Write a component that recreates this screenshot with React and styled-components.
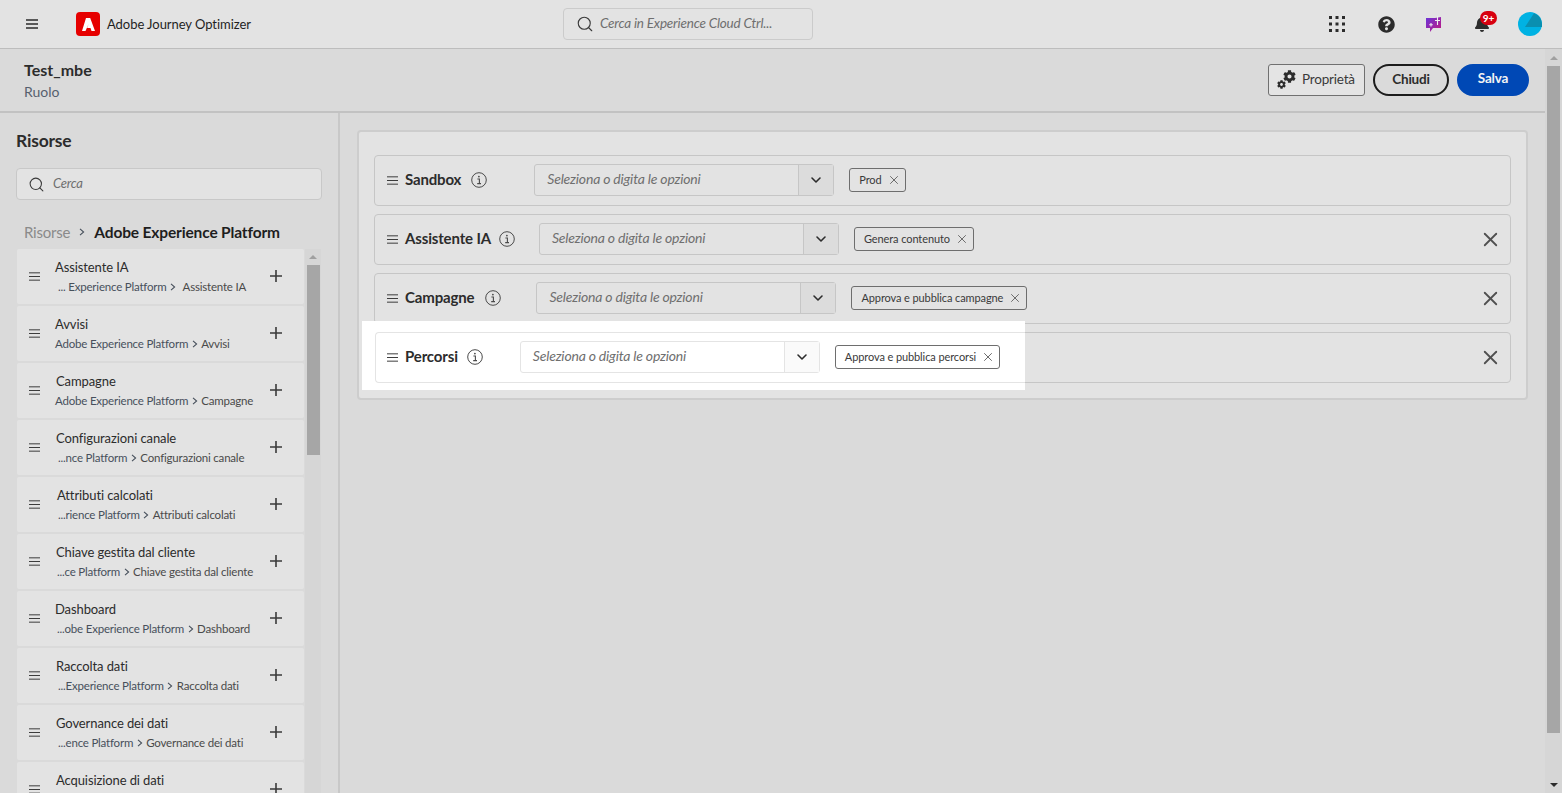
import React from 'react'
import styled, { createGlobalStyle } from 'styled-components'
import { Search, ChevronDown, X } from 'lucide-react'
import { FaQuestionCircle, FaBell, FaCog } from 'react-icons/fa'

const GlobalStyle = createGlobalStyle`
  html, body { margin: 0; padding: 0; height: 100%; overflow: hidden; }
  body { font-family: Lato, "Noto Sans", sans-serif; color: #2c2c2c; background: #dadada; }
  * { box-sizing: border-box; }
`

const Page = styled.div`
  height: 100vh;
  display: flex;
  flex-direction: column;
  overflow: hidden;
`

const TopBar = styled.header`
  flex: none;
  height: 49px;
  display: grid;
  grid-template-columns: 563px 250px 1fr;
  align-items: center;
  background: #e3e3e3;
  border-bottom: 1px solid #bdbdbd;
`

const Brand = styled.div`
  display: flex;
  align-items: center;
  padding-left: 26px;
`

const BrandName = styled.span`
  margin-left: 7px;
  font-size: 13px;
  color: #1f1f1f;
  letter-spacing: -0.05px;
`

const LogoBox = styled.span`
  margin-left: 38px;
  width: 24px;
  height: 24px;
  border-radius: 4px;
  background: #e60000;
  display: flex;
  align-items: center;
  justify-content: center;
`

const GlobalSearch = styled.div`
  height: 32px;
  display: flex;
  align-items: center;
  gap: 6px;
  padding-left: 12px;
  border: 1px solid #cbcbcb;
  border-radius: 4px;
  color: #3a3a3a;
`

const SearchHint = styled.span`
  font-size: ${p => p.$size || 14}px;
  font-style: italic;
  color: #6f6f6f;
  letter-spacing: -0.2px;
  margin-bottom: ${p => p.$lift || 0}px;
`

const TopIcons = styled.div`
  display: flex;
  align-items: center;
  justify-content: flex-end;
  padding-right: 20px;
`

const IconSlot = styled.span`
  position: relative;
  width: 24px;
  height: 24px;
  margin-left: ${p => p.$gap}px;
  display: flex;
  align-items: center;
  justify-content: center;
  color: #2c2c2c;
`

const Badge = styled.span`
  position: absolute;
  top: -1px;
  left: 10px;
  width: 17px;
  height: 14px;
  border-radius: 7px;
  background: #d7000f;
  color: #fff;
  font-size: 10px;
  font-weight: 700;
  line-height: 14px;
  text-align: center;
`

const Body = styled.div`
  flex: 1;
  min-height: 0;
  display: flex;
`

const Main = styled.div`
  flex: 1;
  min-width: 0;
  display: flex;
  flex-direction: column;
`

const PageHeader = styled.div`
  flex: none;
  height: 64px;
  display: flex;
  align-items: center;
  justify-content: space-between;
  padding: 0 16px 0 24px;
  border-bottom: 2px solid #c2c2c2;
`

const TitleBlock = styled.div`
  display: flex;
  flex-direction: column;
  gap: 3px;
`

const PageTitle = styled.div`
  font-size: 16px;
  font-weight: 700;
  line-height: 20px;
  color: #2c2c2c;
`

const PageRole = styled.div`
  font-size: 14px;
  line-height: 18px;
  color: #56606e;
`

const HeaderActions = styled.div`
  display: flex;
  align-items: center;
  gap: 8px;
  margin-top: -1px;
`

const PropsButton = styled.button`
  width: 97px;
  height: 32px;
  display: flex;
  align-items: center;
  gap: 6px;
  padding: 0 0 2px 8px;
  background: #e4e4e4;
  border: 1px solid #707070;
  border-radius: 3px;
  font: 13.5px Lato, sans-serif;
  color: #3a3a3a;
  letter-spacing: -0.2px;
`

const GearPair = styled.span`
  position: relative;
  width: 19px;
  height: 19px;
  margin-top: 2px;
  display: block;
  color: #2c2c2c;
  & > svg { position: absolute; }
  & > svg:first-child { right: 0; top: 0; }
  & > svg:last-child { left: 0; bottom: 0; }
`

const PillButton = styled.button`
  width: ${p => p.$w}px;
  height: 32px;
  border-radius: 16px;
  border: 2px solid ${p => (p.$primary ? '#0048b5' : '#1c1c1c')};
  background: ${p => (p.$primary ? '#0048b5' : 'transparent')};
  color: ${p => (p.$primary ? '#f4f4f4' : '#2c2c2c')};
  font: 700 13.5px Lato, sans-serif;
  letter-spacing: -0.2px;
  padding: 0 0 ${p => (p.$primary ? 3 : 2)}px;
`

const Columns = styled.div`
  flex: 1;
  min-height: 0;
  display: flex;
`

const Sidebar = styled.aside`
  flex: none;
  width: 340px;
  display: flex;
  flex-direction: column;
  border-right: 2px solid #c8c8c8;
  overflow: hidden;
`

const SideTitle = styled.h2`
  margin: 17px 0 0 16px;
  font-size: 17.5px;
  line-height: 22px;
  font-weight: 700;
  color: #2c2c2c;
  letter-spacing: -0.2px;
`

const SideSearch = styled.div`
  margin: 16px 16px 0 16px;
  height: 32px;
  flex: none;
  display: flex;
  align-items: center;
  gap: 8px;
  padding-left: 11px;
  background: #e3e3e3;
  border: 1px solid #c8c8c8;
  border-radius: 4px;
  color: #3a3a3a;
`

const Crumbs = styled.div`
  margin: 22px 0 0 24px;
  height: 20px;
  flex: none;
  display: flex;
  align-items: center;
  gap: 9px;
  white-space: nowrap;
`

const CrumbRoot = styled.span`
  font-size: 15px;
  color: #8a8a8a;
  letter-spacing: -0.2px;
`

const CrumbCurrent = styled.span`
  font-size: 15.5px;
  color: #1e1e1e;
  font-weight: 700;
  letter-spacing: -0.15px;
`

const ListArea = styled.div`
  flex: 1;
  min-height: 0;
  margin-top: 7px;
  display: flex;
  padding-left: 17px;
`

const ResourceList = styled.div`
  width: 287px;
  flex: none;
  display: flex;
  flex-direction: column;
  gap: 2px;
`

const ResourceItem = styled.div`
  flex: none;
  height: 55px;
  display: grid;
  grid-template-columns: 26px 1fr 34px;
  align-items: center;
  background: #e3e3e3;
  border-radius: 2px;
  padding-left: 12px;
`

const ResourceText = styled.div`
  min-width: 0;
  min-height: 37px;
  margin-top: -2px;
  padding-top: 1px;
`

const ResourceName = styled.div`
  margin-left: ${p => p.$x}px;
  font-size: 13px;
  line-height: 18px;
  color: #2c2c2c;
  letter-spacing: -0.1px;
`

const ResourcePath = styled.div`
  margin-top: 4px;
  margin-left: ${p => p.$x}px;
  display: flex;
  align-items: center;
  gap: 3.5px;
  font-size: 11.5px;
  line-height: 14px;
  color: #47505c;
  letter-spacing: -0.2px;
  white-space: nowrap;
`

const Leaf = styled.span`
  margin-left: ${p => p.$gap || 0}px;
  color: #4a4a4a;
`

const PlusSlot = styled.span`
  display: flex;
  margin-top: -2px;
`

const ScrollTrack = styled.div`
  flex: none;
  width: ${p => p.$w}px;
  margin-left: ${p => p.$ml || 0}px;
  display: flex;
  flex-direction: column;
  align-items: center;
  background: #d6d6d6;
`

const ArrowUp = styled.span`
  flex: none;
  width: 0;
  height: 0;
  margin-top: ${p => p.$mt}px;
  border-left: 4px solid transparent;
  border-right: 4px solid transparent;
  border-bottom: 4px solid #a0a0a0;
`

const ArrowDown = styled.span`
  flex: none;
  width: 0;
  height: 0;
  margin-top: auto;
  margin-bottom: 6px;
  border-left: 4px solid transparent;
  border-right: 4px solid transparent;
  border-top: 4px solid #2c2c2c;
`

const Thumb = styled.div`
  flex: none;
  width: 13px;
  height: ${p => p.$h}px;
  margin-top: ${p => p.$mt}px;
  background: #a6a6a6;
`

const Content = styled.section`
  flex: 1;
  min-width: 0;
  padding: 17px;
`

const Panel = styled.div`
  display: flex;
  flex-direction: column;
  gap: 8px;
  padding: 23px 15px 15px 15px;
  background: #e3e3e3;
  border: 2px solid #cdcdcd;
  border-radius: 4px;
`

const Row = styled.div`
  position: relative;
  height: 51px;
  display: flex;
  align-items: center;
  padding: 0 12px;
  border: 1px solid #c6c6c6;
  border-radius: 4px;
`

const Spotlight = styled.div`
  position: absolute;
  left: -13px;
  top: -12px;
  width: 663px;
  height: 69px;
  background: #fff;
`

const SpotlightFrame = styled.div`
  position: absolute;
  left: 13px;
  top: 11px;
  right: 0;
  height: 51px;
  border: 1px solid #e4e4e4;
  border-right: none;
  border-radius: 4px 0 0 4px;
`

const RowBody = styled.div`
  position: relative;
  flex: 1;
  display: flex;
  align-items: center;
  min-width: 0;
  margin-top: -1px;
`

const RowLabel = styled.span`
  margin-left: 7px;
  margin-bottom: 2px;
  font-size: 15px;
  font-weight: 700;
  color: #2c2c2c;
  letter-spacing: -0.15px;
`

const InfoSlot = styled.span`
  display: flex;
  margin-left: ${p => p.$gap}px;
  color: #4a4a4a;
`

const ComboBox = styled.div`
  width: 300px;
  height: 32px;
  margin-left: ${p => p.$gap}px;
  display: flex;
  align-items: stretch;
  border: 1px solid ${p => (p.$lit ? '#e4e4e4' : '#c6c6c6')};
  border-radius: 3px;
  background: ${p => (p.$lit ? '#fff' : '#e3e3e3')};
`

const ComboInput = styled.div`
  flex: 1;
  display: flex;
  align-items: center;
  padding-left: 12px;
`

const ComboButton = styled.div`
  width: 35px;
  display: flex;
  align-items: center;
  justify-content: center;
  border-left: 1px solid ${p => (p.$lit ? '#e4e4e4' : '#c6c6c6')};
  background: ${p => (p.$lit ? '#fafafa' : '#dcdcdc')};
  color: #2c2c2c;
`

const Tag = styled.span`
  height: 24px;
  margin-left: 15px;
  display: flex;
  align-items: center;
  gap: 5px;
  padding: 0 4px 2px 9px;
  border: 1px solid #6e6e6e;
  border-radius: 3px;
  font-size: 11px;
  color: #3a3a3a;
  white-space: nowrap;
  letter-spacing: -0.1px;
`

const TagClose = styled.span`
  display: flex;
  margin-top: 2px;
  color: #6a6a6a;
`

const RowClose = styled.span`
  margin-left: auto;
  margin-right: -3.5px;
  display: flex;
  color: #4f4f4f;
`

const Hamburger = ({ size = 11, weight = 1.2, color = '#2c2c2c' }) => (
  <svg width={size} height={size} viewBox="0 0 12 12" fill="none" stroke={color} strokeWidth={weight}>
    <path d="M0 2h12M0 6h12M0 10h12" />
  </svg>
)

const InfoIcon = () => (
  <svg width="16" height="16" viewBox="0 0 16 16" fill="none" stroke="currentColor">
    <circle cx="8" cy="8" r="7.3" strokeWidth="1" />
    <path d="M6.4 7h2v4.6M6.2 11.6h3.8" strokeWidth="1.1" />
    <circle cx="7.9" cy="4.6" r="0.9" fill="currentColor" stroke="none" />
  </svg>
)

const AdobeMark = () => (
  <svg width="13" height="13" viewBox="0 0 13 13" fill="#fff">
    <path d="M4 0h4.2L13 13H9.5l-1-3H5.1l1.5-4-3.1 7H0z" />
  </svg>
)

const AppGrid = () => (
  <svg width="16" height="16" viewBox="0 0 16 16" fill="#2c2c2c">
    {[0, 6.5, 13].flatMap(y =>
      [0, 6.5, 13].map(x => <rect key={`${x}-${y}`} x={x} y={y} width="3" height="3" />)
    )}
  </svg>
)

const ChatSpark = () => (
  <svg width="18" height="18" viewBox="0 0 18 18">
    <defs>
      <linearGradient id="chatGrad" x1="0" y1="0" x2="1" y2="1">
        <stop offset="0" stopColor="#6a35d9" />
        <stop offset="1" stopColor="#c2187f" />
      </linearGradient>
    </defs>
    <path d="M1 3h9l6-1v11H8l-3 4v-4H1z" fill="url(#chatGrad)" />
    <path d="M12.5 1v9M10 5.5h5M6 8v3.6M4.2 9.8h3.6" stroke="#eee" strokeWidth="1.1" fill="none" />
  </svg>
)

const Avatar = () => (
  <svg width="24" height="24" viewBox="0 0 24 24">
    <circle cx="12" cy="12" r="12" fill="#00b2e3" />
    <path d="M16 1.2A12 12 0 0 1 24 12v3H7z" fill="#0a8fb0" />
  </svg>
)

const Chevron = () => (
  <svg width="6" height="8" viewBox="0 0 6 8" fill="none" stroke="#47505c" strokeWidth="1.1">
    <path d="M1 .8 4.6 4 1 7.2" />
  </svg>
)

const Plus = () => (
  <svg width="12" height="12" viewBox="0 0 12 12" stroke="#3a3a3a" strokeWidth="1.6">
    <path d="M6 0v12M0 6h12" />
  </svg>
)

const resources = [
  { name: 'Assistente IA', nameX: 0, path: '... Experience Platform', pathX: 3, leaf: 'Assistente IA', leafGap: 3 },
  { name: 'Avvisi', nameX: 0, path: 'Adobe Experience Platform', pathX: 0, leaf: 'Avvisi' },
  { name: 'Campagne', nameX: 1, path: 'Adobe Experience Platform', pathX: 0, leaf: 'Campagne' },
  { name: 'Configurazioni canale', nameX: 1, path: '...nce Platform', pathX: 3, leaf: 'Configurazioni canale' },
  { name: 'Attributi calcolati', nameX: 2, path: '...rience Platform', pathX: 3, leaf: 'Attributi calcolati' },
  { name: 'Chiave gestita dal cliente', nameX: 1, path: '...ce Platform', pathX: 2, leaf: 'Chiave gestita dal cliente' },
  { name: 'Dashboard', nameX: 0, path: '...obe Experience Platform', pathX: 2, leaf: 'Dashboard' },
  { name: 'Raccolta dati', nameX: 1, path: '...Experience Platform', pathX: 3, leaf: 'Raccolta dati' },
  { name: 'Governance dei dati', nameX: 1, path: '...ence Platform', pathX: 3, leaf: 'Governance dei dati' },
  { name: 'Acquisizione di dati', nameX: 1 },
]

const rows = [
  { label: 'Sandbox', infoGap: 10, gap: 47, tag: 'Prod', closable: false },
  { label: 'Assistente IA', infoGap: 8, gap: 24, tag: 'Genera contenuto', closable: true },
  { label: 'Campagne', infoGap: 11, gap: 35, tag: 'Approva e pubblica campagne', closable: true },
  { label: 'Percorsi', infoGap: 9, gap: 37, tag: 'Approva e pubblica percorsi', closable: true, lit: true },
]

const PermissionRow = ({ label, infoGap, gap, tag, closable, lit }) => (
  <Row>
    {lit && (
      <Spotlight>
        <SpotlightFrame />
      </Spotlight>
    )}
    <RowBody>
      <Hamburger size={11} weight={1} />
      <RowLabel>{label}</RowLabel>
      <InfoSlot $gap={infoGap}>
        <InfoIcon />
      </InfoSlot>
      <ComboBox $gap={gap} $lit={lit}>
        <ComboInput>
          <SearchHint $lift={3}>Seleziona o digita le opzioni</SearchHint>
        </ComboInput>
        <ComboButton $lit={lit}>
          <ChevronDown size={16} strokeWidth={2.4} />
        </ComboButton>
      </ComboBox>
      <Tag>
        {tag}
        <TagClose>
          <X size={14} strokeWidth={1.7} />
        </TagClose>
      </Tag>
      {closable && (
        <RowClose>
          <X size={23} strokeWidth={1.9} />
        </RowClose>
      )}
    </RowBody>
  </Row>
)

export default function App() {
  return (
    <>
      <GlobalStyle />
      <Page>
        <TopBar>
          <Brand>
            <Hamburger size={12} weight={1.7} />
            <LogoBox>
              <AdobeMark />
            </LogoBox>
            <BrandName>Adobe Journey Optimizer</BrandName>
          </Brand>
          <GlobalSearch>
            <Search size={18} strokeWidth={1.5} />
            <SearchHint $size={13.5} $lift={3}>Cerca in Experience Cloud Ctrl...</SearchHint>
          </GlobalSearch>
          <TopIcons>
            <IconSlot $gap={0}>
              <AppGrid />
            </IconSlot>
            <IconSlot $gap={25}>
              <FaQuestionCircle size={17} />
            </IconSlot>
            <IconSlot $gap={24}>
              <ChatSpark />
            </IconSlot>
            <IconSlot $gap={24}>
              <FaBell size={16} />
              <Badge>9+</Badge>
            </IconSlot>
            <IconSlot $gap={24}>
              <Avatar />
            </IconSlot>
          </TopIcons>
        </TopBar>
        <Body>
          <Main>
            <PageHeader>
              <TitleBlock>
                <PageTitle>Test_mbe</PageTitle>
                <PageRole>Ruolo</PageRole>
              </TitleBlock>
              <HeaderActions>
                <PropsButton>
                  <GearPair>
                    <FaCog size={13} />
                    <FaCog size={9} />
                  </GearPair>
                  Proprietà
                </PropsButton>
                <PillButton $w={76}>Chiudi</PillButton>
                <PillButton $w={72} $primary>
                  Salva
                </PillButton>
              </HeaderActions>
            </PageHeader>
            <Columns>
              <Sidebar>
                <SideTitle>Risorse</SideTitle>
                <SideSearch>
                  <Search size={17} strokeWidth={1.5} />
                  <SearchHint $size={13} $lift={2}>Cerca</SearchHint>
                </SideSearch>
                <Crumbs>
                  <CrumbRoot>Risorse</CrumbRoot>
                  <Chevron />
                  <CrumbCurrent>Adobe Experience Platform</CrumbCurrent>
                </Crumbs>
                <ListArea>
                  <ResourceList>
                    {resources.map(r => (
                      <ResourceItem key={r.name}>
                        <Hamburger size={11} weight={1} />
                        <ResourceText>
                          <ResourceName $x={r.nameX}>{r.name}</ResourceName>
                          {r.path && (
                            <ResourcePath $x={r.pathX}>
                              {r.path}
                              <Chevron />
                              <Leaf $gap={r.leafGap}>{r.leaf}</Leaf>
                            </ResourcePath>
                          )}
                        </ResourceText>
                        <PlusSlot>
                          <Plus />
                        </PlusSlot>
                      </ResourceItem>
                    ))}
                  </ResourceList>
                  <ScrollTrack $w={16} $ml={1}>
                    <ArrowUp $mt={6} />
                    <Thumb $h={190} $mt={6} />
                  </ScrollTrack>
                </ListArea>
              </Sidebar>
              <Content>
                <Panel>
                  {rows.map(r => (
                    <PermissionRow key={r.label} {...r} />
                  ))}
                </Panel>
              </Content>
            </Columns>
          </Main>
          <ScrollTrack $w={17}>
            <ArrowUp $mt={7} />
            <Thumb $h={667} $mt={6} />
            <ArrowDown />
          </ScrollTrack>
        </Body>
      </Page>
    </>
  )
}
